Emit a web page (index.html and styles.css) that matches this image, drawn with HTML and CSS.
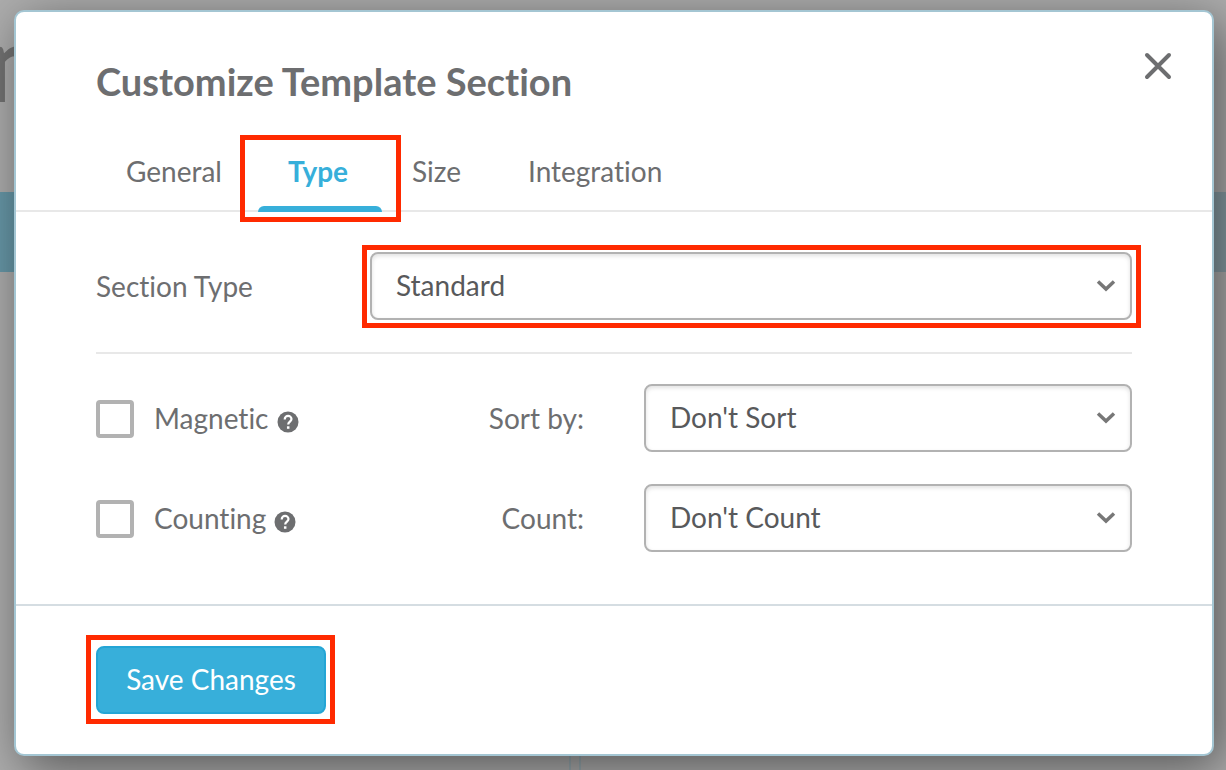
FILE: index.html
```html
<!DOCTYPE html>
<html lang="en">
<head>
<meta charset="utf-8">
<title>Customize Template Section</title>
<link rel="stylesheet" href="styles.css">
</head>
<body>
<div class="backdrop" aria-hidden="true">
  <span class="backdrop-title">m</span>
  <div class="backdrop-band"></div>
  <div class="backdrop-column"></div>
</div>
<form class="modal" role="dialog" aria-labelledby="modal-title">
  <header class="modal-header">
    <h1 class="modal-title" id="modal-title">Customize Template Section</h1>
    <button class="close" type="button" aria-label="Close">
      <svg width="28" height="28" viewBox="0 0 28 28" fill="none" stroke="currentColor" stroke-width="4" stroke-linecap="round"><path d="M3 3 25 25M25 3 3 25"/></svg>
    </button>
  </header>
  <nav class="tabs" role="tablist">
    <button class="tab" type="button" role="tab">General</button>
    <button class="tab tab-active marked" type="button" role="tab" aria-selected="true">Type</button>
    <button class="tab" type="button" role="tab">Size</button>
    <button class="tab" type="button" role="tab">Integration</button>
  </nav>
  <div class="modal-body">
    <div class="type-row">
      <label for="section-type">Section Type</label>
      <div class="select marked">
        <select id="section-type"><option>Standard</option></select>
        <svg class="chevron" width="20" height="12" viewBox="0 0 20 12" fill="none" stroke="currentColor" stroke-width="3.500"><path d="M2 1.500 10 9 18 1.500"/></svg>
      </div>
    </div>
    <div class="option-row">
      <div class="option">
        <input class="check" type="checkbox" id="magnetic">
        <label for="magnetic">Magnetic</label>
        <svg class="help" width="22" height="22" viewBox="0 0 22 22" fill="none"><circle cx="11" cy="11" r="10.500" fill="currentColor"/><path d="M7.700 8.500C7.700 3.600 14.500 4.100 14.500 8C14.500 10.500 11.200 10.700 11.200 13.500" stroke="#fff" stroke-width="2.200"/><path d="M11.200 15.300v2.500" stroke="#fff" stroke-width="2.500"/></svg>
      </div>
      <label class="select-label" for="sort-by">Sort by:</label>
      <div class="select">
        <select id="sort-by"><option>Don't Sort</option></select>
        <svg class="chevron" width="20" height="12" viewBox="0 0 20 12" fill="none" stroke="currentColor" stroke-width="3.500"><path d="M2 1.500 10 9 18 1.500"/></svg>
      </div>
    </div>
    <div class="option-row">
      <div class="option">
        <input class="check" type="checkbox" id="counting">
        <label for="counting">Counting</label>
        <svg class="help" width="22" height="22" viewBox="0 0 22 22" fill="none"><circle cx="11" cy="11" r="10.500" fill="currentColor"/><path d="M7.700 8.500C7.700 3.600 14.500 4.100 14.500 8C14.500 10.500 11.200 10.700 11.200 13.500" stroke="#fff" stroke-width="2.200"/><path d="M11.200 15.300v2.500" stroke="#fff" stroke-width="2.500"/></svg>
      </div>
      <label class="select-label" for="count">Count:</label>
      <div class="select">
        <select id="count"><option>Don't Count</option></select>
        <svg class="chevron" width="20" height="12" viewBox="0 0 20 12" fill="none" stroke="currentColor" stroke-width="3.500"><path d="M2 1.500 10 9 18 1.500"/></svg>
      </div>
    </div>
  </div>
  <footer class="modal-footer">
    <button class="save marked" type="submit">Save Changes</button>
  </footer>
</form>
</body>
</html>
```
FILE: styles.css
```css
* { box-sizing: border-box; }

body {
  margin: 0;
  min-height: 100vh;
  padding: 10px 12px 14px 14px;
  background: #adadad;
  color: #6d6e70;
  font: 28px/32px Lato, "Liberation Sans", sans-serif;
  font-variant-ligatures: none;
  overflow: hidden;
}

button, select {
  font: inherit;
  font-variant-ligatures: none;
  color: inherit;
  margin: 0;
}

/* Dimmed page behind the dialog */
.backdrop {
  position: absolute;
  inset: 0;
  overflow: hidden;
}

.backdrop-title {
  position: absolute;
  left: -15px;
  top: 0;
  font-size: 108px;
  line-height: 120px;
  font-weight: 700;
  color: #737373;
}

.backdrop-band {
  position: absolute;
  left: 0;
  right: 0;
  top: 192px;
  height: 80px;
  background: linear-gradient(90deg, #6798a8, #889da5);
}

.backdrop-column {
  position: absolute;
  left: 569px;
  bottom: 0;
  width: 12px;
  height: 40px;
  border: solid #98a9af;
  border-width: 0 2px;
}

.modal {
  position: relative;
  background: #fff;
  border: 2px solid #a4c6d3;
  border-radius: 10px;
  box-shadow: 8px 12px 50px rgba(0, 0, 0, 0.5);
}

.modal-header {
  display: flex;
  justify-content: space-between;
  align-items: flex-start;
  padding: 40px 40px 0 80px;
}

.modal-title {
  margin: 7px 0 0;
  font-size: 38px;
  line-height: 44px;
  font-weight: 700;
}

.close {
  display: flex;
  padding: 0;
  border: 0;
  background: none;
}

.tabs {
  display: grid;
  grid-template-columns: 162px 124px 116px auto 1fr;
  margin-top: 27px;
  padding: 0 80px;
  border-bottom: 2px solid #e8e8e8;
}

.tab {
  height: 82px;
  margin-bottom: -2px;
  padding: 0 30px;
  border: 0;
  background: none;
  text-align: left;
}

.tab-active {
  color: #37afda;
  font-weight: 700;
}

.tab-active::before {
  content: "";
  position: absolute;
  left: 0;
  right: 0;
  bottom: 0;
  height: 6px;
  border-radius: 6px 6px 0 0;
  background: #37afda;
}

/* Red callout frames */
.marked { position: relative; }

.marked::after {
  content: "";
  position: absolute;
  inset: -7px -9px -8px -8px;
  border: 5px solid #ff2a00;
  pointer-events: none;
}

.tab.marked::after { inset: 5px -19px -10px -18px; }
.save.marked::after { inset: -13px -11px -12px -12px; }

.modal-body { padding: 40px 80px 52px; }

.type-row {
  display: grid;
  grid-template-columns: 274px 1fr;
  align-items: center;
  padding-bottom: 32px;
  border-bottom: 2px solid #e8e8e8;
}

.option-row {
  display: grid;
  grid-template-columns: 1fr auto 488px;
  align-items: center;
  column-gap: 60px;
  margin-top: 30px;
}

.option-row + .option-row { margin-top: 32px; }

.option {
  display: flex;
  align-items: center;
}

.check {
  appearance: none;
  width: 38px;
  height: 38px;
  margin: 2px 20px 0 0;
  border: 4px solid #b2b2b2;
  border-radius: 4px;
  background: #fff;
}

.help { margin: 8px 0 0 8px; }

.select {
  position: relative;
  height: 68px;
}

.select select {
  appearance: none;
  width: 100%;
  height: 68px;
  padding: 0 60px 2px 24px;
  border: 2px solid #b2b2b2;
  border-radius: 8px;
  background: #fff;
  color: #58595b;
  box-shadow: inset 0 2px 4px rgba(0, 0, 0, 0.12);
}

.chevron {
  position: absolute;
  right: 16px;
  top: 28px;
  color: #777;
  pointer-events: none;
}

.modal-footer {
  padding: 40px 80px;
  border-top: 2px solid #d5dde2;
}

.save {
  display: block;
  min-width: 230px;
  height: 68px;
  padding: 0 24px 2px;
  border: 2px solid #24a5d5;
  border-radius: 8px;
  background: #37afda;
  color: #fff;
}
```
